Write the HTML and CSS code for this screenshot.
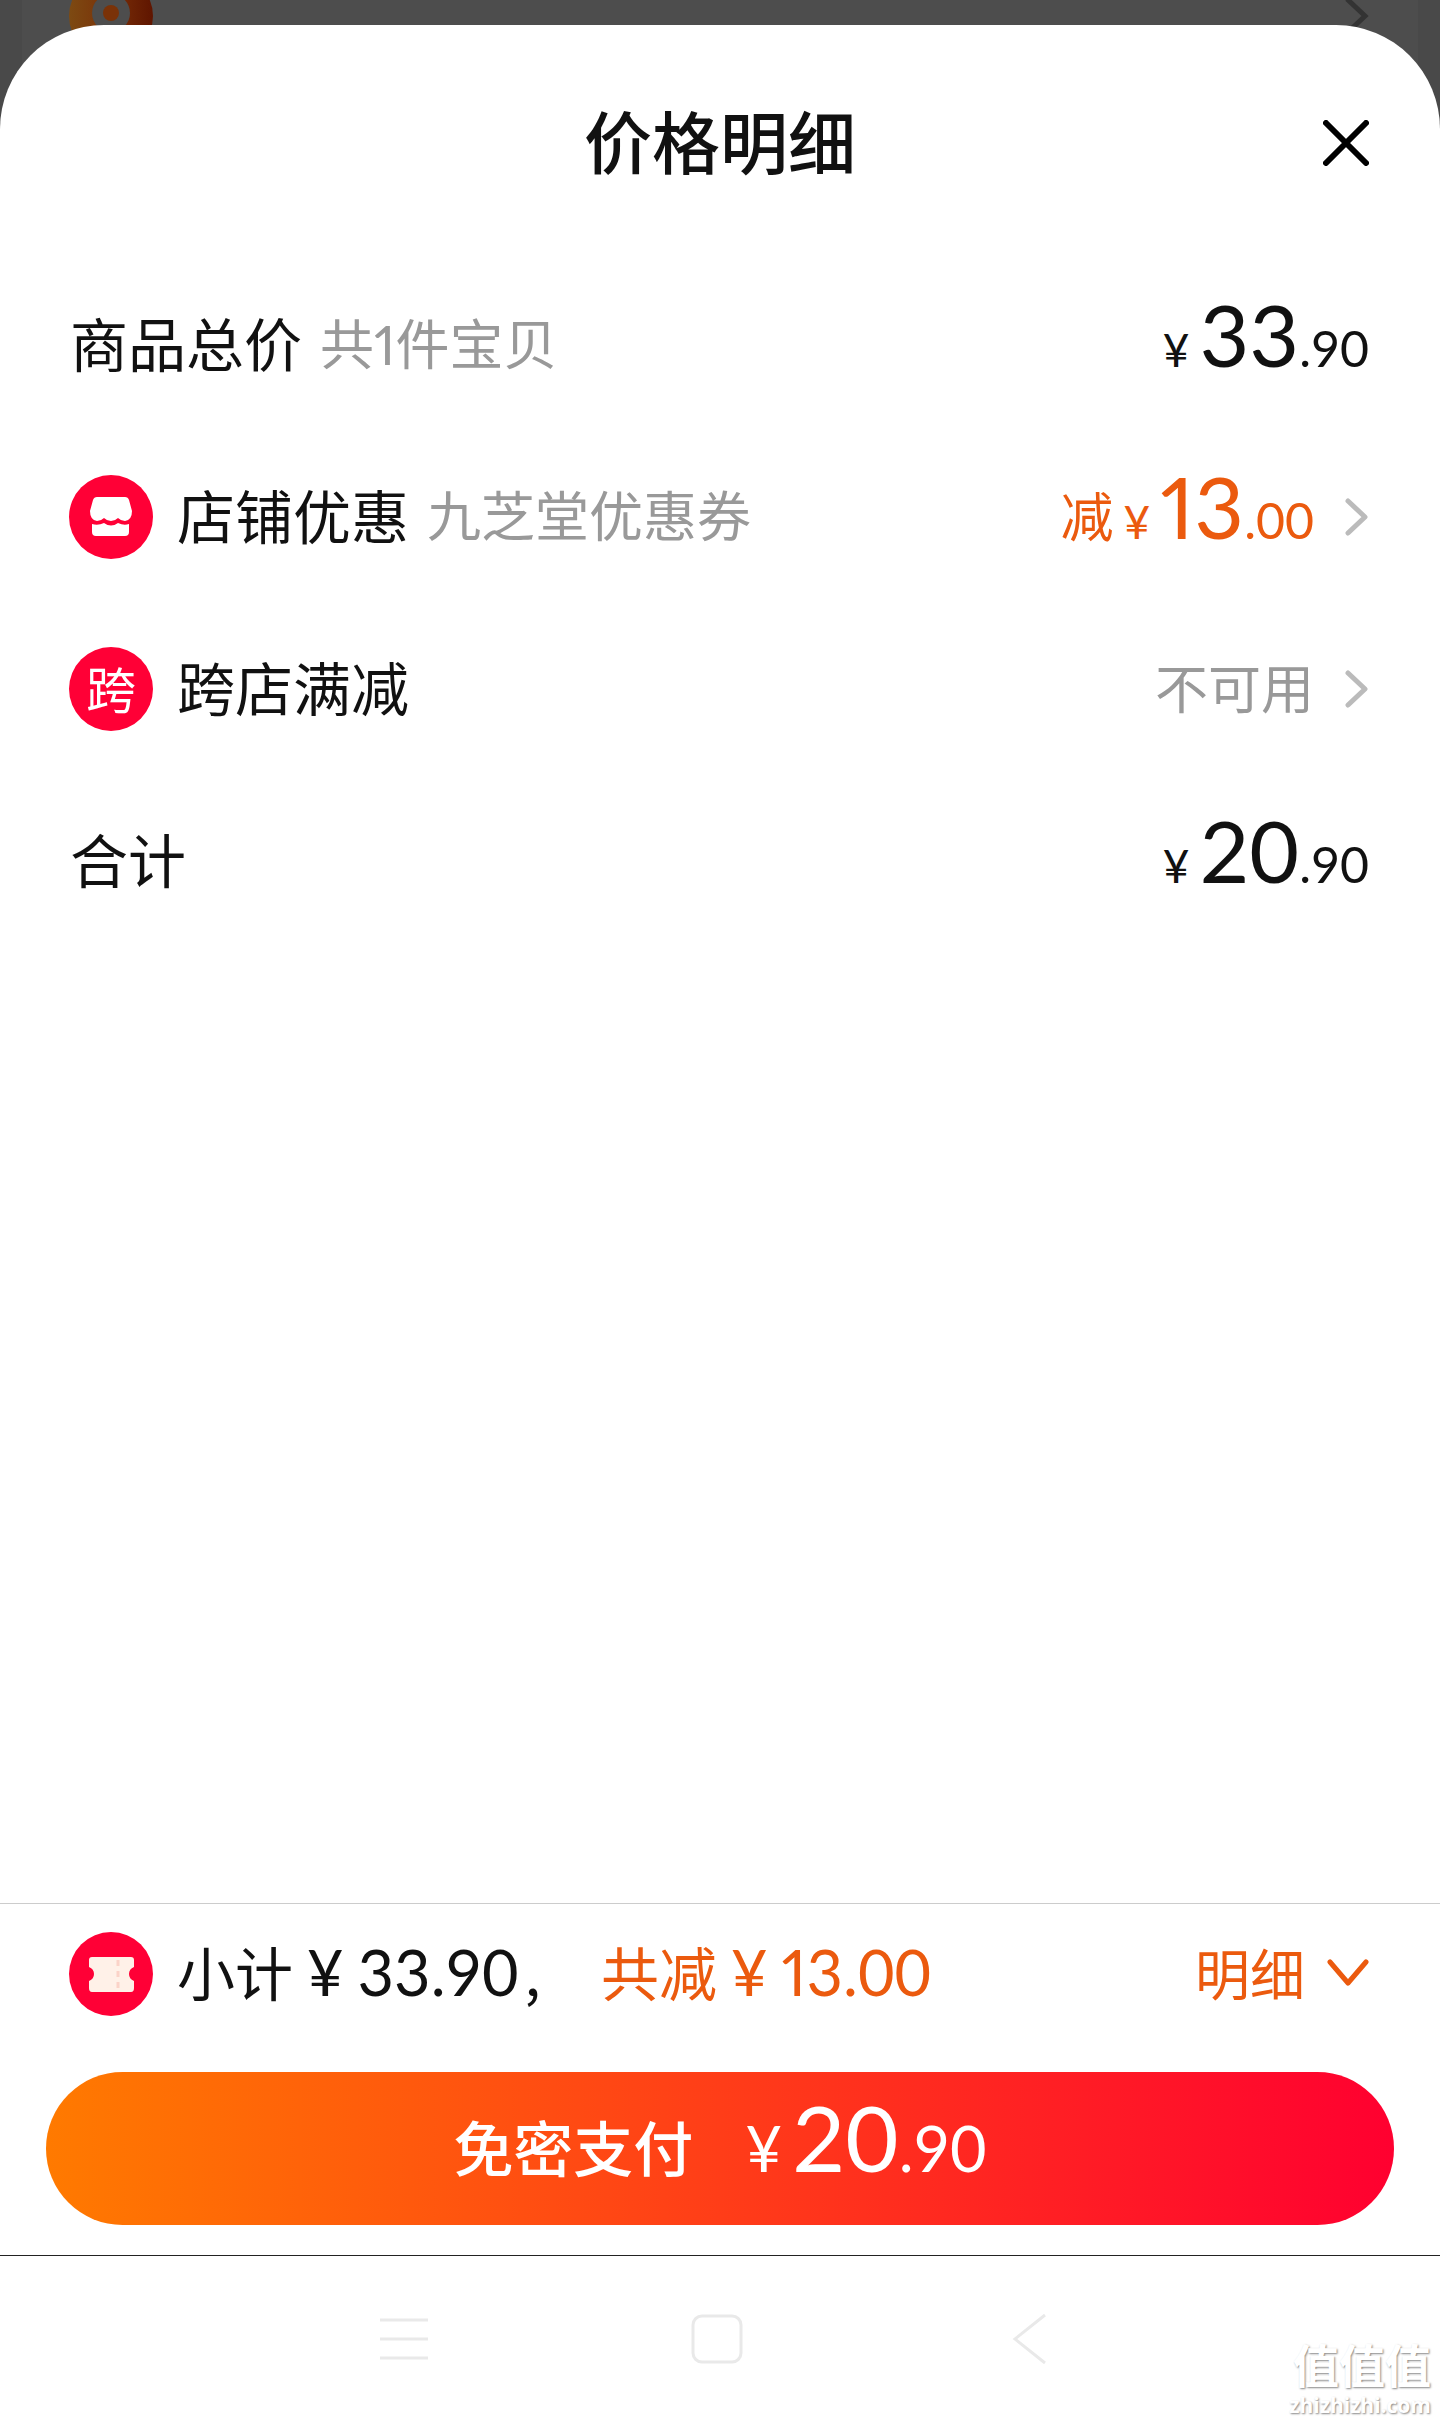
FILE: index.html
```html
<!DOCTYPE html>
<html lang="zh-CN">
<head>
<meta charset="utf-8">
<meta name="viewport" content="width=device-width, initial-scale=1">
<title>价格明细</title>
<link rel="stylesheet" href="styles.css">
</head>
<body>
<div class="backdrop" aria-hidden="true">
  <svg class="backdrop-logo" viewBox="0 0 84 84">
    <defs><linearGradient id="ring"><stop offset="0" stop-color="#7d4a12"/><stop offset=".5" stop-color="#7a3008"/><stop offset="1" stop-color="#5f1500"/></linearGradient></defs>
    <circle cx="42" cy="42" r="42" fill="url(#ring)"/>
    <circle cx="42" cy="39" r="19" fill="#4d4d4d"/>
    <circle cx="42" cy="39" r="8" fill="#7a3208"/>
  </svg>
  <svg class="backdrop-arrow" viewBox="0 0 26 40"><path d="M3 3 21 20 3 37" fill="none" stroke="#333" stroke-width="5"/></svg>
</div>
<main class="sheet">
  <header class="header">
    <h1 class="title">价格明细</h1>
    <button class="close" type="button" aria-label="关闭">
      <svg viewBox="0 0 46 46"><path d="M3 3 43 43M43 3 3 43" fill="none" stroke="#000" stroke-width="6" stroke-linecap="round"/></svg>
    </button>
  </header>
  <ul class="rows">
    <li class="row">
      <span class="label">商品总价</span>
      <span class="note">共<span class="count">1</span>件宝贝</span>
      <span class="value"><span class="price"><span class="yen">¥</span><span class="int">33</span><span class="dec">.90</span></span></span>
    </li>
    <li class="row">
      <svg class="icon" viewBox="0 0 84 84"><circle cx="42" cy="42" r="42" fill="#ff0036"/>
        <path d="M28 22H56Q59 22 60 25L63 36Q63 45 56 46Q52 46 49 43Q46 46 42 46Q38 46 35 43Q32 46 28 46Q21 45 21 36L24 25Q25 22 28 22Z" fill="#fff"/>
        <path d="M23 49Q29 51 35 48Q42 53 49 48Q55 51 60 49V57Q60 61 56 61H27Q23 61 23 57Z" fill="#fff"/>
      </svg>
      <span class="label">店铺优惠</span>
      <span class="note">九芝堂优惠券</span>
      <button class="value off" type="button"><span class="word">减</span><span class="price"><span class="yen">¥</span><span class="int"><span class="one">1</span>3</span><span class="dec">.00</span></span>
        <svg class="arrow" viewBox="0 0 24 38"><path d="M3 3 20 19 3 35"/></svg></button>
    </li>
    <li class="row">
      <span class="icon badge">跨</span>
      <span class="label">跨店满减</span>
      <button class="value muted" type="button"><span class="word">不可用</span>
        <svg class="arrow" viewBox="0 0 24 38"><path d="M3 3 20 19 3 35"/></svg></button>
    </li>
    <li class="row">
      <span class="label">合计</span>
      <span class="value"><span class="price"><span class="yen">¥</span><span class="int">20</span><span class="dec">.90</span></span></span>
    </li>
  </ul>
  <footer class="footer">
    <div class="summary">
      <svg class="icon" viewBox="0 0 84 84"><circle cx="42" cy="42" r="42" fill="#ff0036"/>
        <path d="M23 25H62Q65 25 65 28V35Q60 37 60 42Q60 47 65 49V56Q65 60 62 60H23Q20 60 20 56V49Q25 47 25 42Q25 37 20 35V28Q20 25 23 25Z" fill="#fff1e8"/>
        <path d="M49 28V58" stroke="#fbd3c8" stroke-width="3" stroke-dasharray="6 5"/>
      </svg>
      <span class="subtotal">小计<span class="sum">¥</span><span class="sum">33.90</span><span class="comma">,</span></span>
      <span class="saved">共减<span class="sum">¥</span><span class="sum"><span class="one">1</span>3.00</span></span>
      <button class="detail" type="button">明细
        <svg viewBox="0 0 42 28"><path d="M3 3 21 24 39 3" fill="none" stroke="#eb5a0e" stroke-width="5" stroke-linecap="round" stroke-linejoin="round"/></svg></button>
    </div>
    <button class="pay" type="button"><span class="pay-word">免密支付</span><span class="price"><span class="yen">¥</span><span class="int">20</span><span class="dec">.90</span></span></button>
  </footer>
</main>
<nav class="nav">
  <button type="button" aria-label="菜单"><svg viewBox="0 0 54 54"><path d="M3 8H51M3 27H51M3 46H51"/></svg></button>
  <button type="button" aria-label="主页"><svg viewBox="0 0 54 54"><rect x="3" y="4" width="48" height="46" rx="9"/></svg></button>
  <button type="button" aria-label="返回"><svg viewBox="0 0 54 54"><path d="M42 3 12 27 42 51"/></svg></button>
  <div class="watermark"><span class="mark-name">值值值</span><span class="mark-site">zhizhizhi.com</span></div>
</nav>
</body>
</html>
```
FILE: styles.css
```css
* { box-sizing: border-box; }

body {
  margin: 0;
  min-height: 100vh;
  display: flex;
  flex-direction: column;
  position: relative;
  background: #fff;
  color: #111;
  font-family: "Noto Sans CJK SC", sans-serif;
  font-size: 58px;
}

button {
  margin: 0;
  padding: 0;
  border: 0;
  background: none;
  font: inherit;
  color: inherit;
}

svg { display: block; flex: none; }

/* dimmed page behind the sheet */
.backdrop {
  position: absolute;
  inset: 0 0 auto;
  height: 160px;
  background: #4d4d4d;
  border: solid #494949;
  border-width: 0 22px;
}
.backdrop-logo { position: absolute; left: 47px; top: -26px; width: 84px; height: 84px; }
.backdrop-arrow { position: absolute; right: 48px; top: -4px; width: 26px; height: 40px; }

.sheet {
  position: relative;
  flex: 1;
  margin-top: 25px;
  display: flex;
  flex-direction: column;
  background: #fff;
  border-radius: 104px 104px 0 0;
}

.header {
  display: grid;
  grid-template-columns: 1fr auto 1fr;
  align-items: center;
  padding: 67px 71px 68px;
}
.title {
  grid-column: 2;
  margin: 0;
  font-size: 68px;
  line-height: 96px;
  font-weight: 500;
}
.close { justify-self: end; margin-top: 6px; }
.close svg { width: 46px; height: 46px; }

.rows { flex: 1; margin: 0; padding: 0; list-style: none; }
.row {
  display: flex;
  align-items: center;
  height: 172px;
  padding: 0 71px 0 70px;
  line-height: 84px;
  white-space: nowrap;
}
.icon { flex: none; width: 84px; height: 84px; margin: 6px 24px 0 -1px; }
.badge {
  border-radius: 50%;
  background: #ff0036;
  color: #fff;
  font-size: 50px;
  line-height: 80px;
  text-align: center;
}
.note { margin-left: 18px; font-size: 54px; color: #999; }
.value { display: flex; align-items: center; margin-left: auto; }
.word { font-size: 53px; }
.off { color: #eb5a0e; }
.muted { color: #999; }
.arrow { width: 24px; height: 38px; margin: 6px 0 0 31px; fill: none; stroke: #bbb; stroke-width: 5; stroke-linecap: round; stroke-linejoin: round; }

/* the digits share the baseline of the label beside them */
.price { white-space: nowrap; }
.yen, .int, .dec, .sum, .count { font-family: Lato, sans-serif; line-height: 0; }
.count, .one { font-variant-numeric: proportional-nums; }
.yen { font-size: 46px; margin: 0 10px; }
.int { font-size: 86px; }
.dec { font-size: 50px; }

.footer { border-top: 1px solid #ccc; }
.summary {
  display: flex;
  align-items: center;
  height: 134px;
  padding: 0 71px 0 70px;
  line-height: 84px;
  white-space: nowrap;
}
.subtotal { width: 424px; }
.sum { font-size: 63px; margin-left: 14px; }
.comma { margin-left: 6px; }
.saved, .detail { color: #eb5a0e; }
.detail { display: flex; align-items: center; gap: 22px; margin-left: auto; font-size: 55px; }
.detail svg { width: 42px; height: 28px; margin-top: 4px; }

.pay {
  display: flex;
  align-items: center;
  justify-content: center;
  gap: 42px;
  width: calc(100% - 92px);
  height: 153px;
  margin: 34px 46px 30px;
  padding-bottom: 6px;
  border-radius: 77px;
  background: linear-gradient(90deg, #ff7a00, #ff0030);
  color: #fff;
  font-size: 60px;
}
.pay-word { font-weight: 500; }
.pay .yen, .pay .dec { font-size: 63px; }
.pay .int { font-size: 92px; }

.nav {
  position: relative;
  display: grid;
  grid-template-columns: repeat(3, 1fr);
  align-items: center;
  justify-items: center;
  height: 166px;
  padding: 0 254px 0 248px;
  border-top: 1px solid #222;
}
.nav svg { width: 54px; height: 54px; fill: none; stroke: #e9e9e9; stroke-width: 3; }

.watermark {
  position: absolute;
  right: 9px;
  bottom: 5px;
  display: flex;
  flex-direction: column;
  align-items: flex-end;
  color: #fff;
  font-weight: 700;
  text-shadow: 1px 1px 2px #888;
}
.mark-name { font-size: 46px; line-height: 54px; }
.mark-site { margin-top: 4px; font-family: "Open Sans", sans-serif; font-size: 21px; line-height: 22px; }
```
